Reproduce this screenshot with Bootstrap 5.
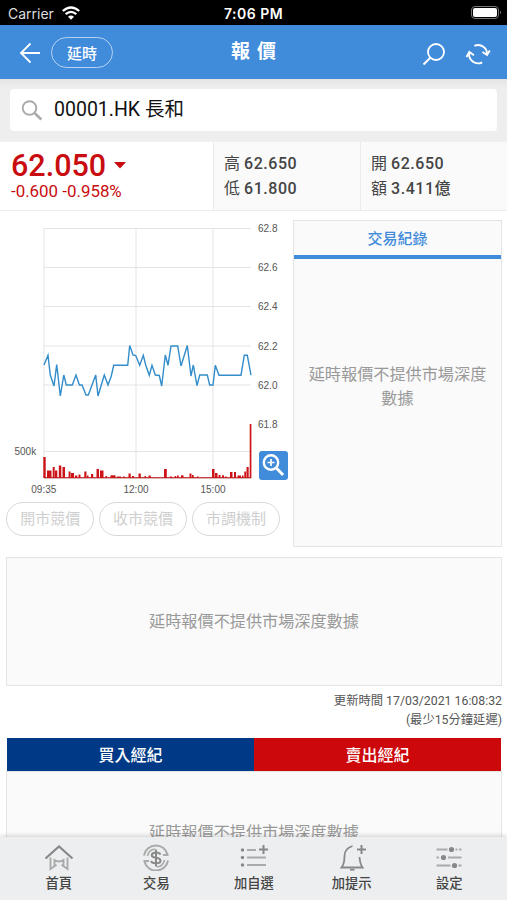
<!DOCTYPE html>
<html lang="zh-Hant">
<head>
<meta charset="utf-8">
<meta name="viewport" content="width=device-width, initial-scale=1">
<title>報價</title>
<link href="https://cdn.jsdelivr.net/npm/bootstrap@5.3.0/dist/css/bootstrap.min.css" rel="stylesheet">
<style>
body{font-family:Roboto,"Noto Sans CJK TC",sans-serif;color:#444;line-height:1.2;background:#fff}
svg{display:block;flex:none}
.status{height:25px;background:#000;color:#fff;font:14px/27px Inter,sans-serif;position:relative}
.status .carrier{color:#ddd;width:54px}
.status .clock{font-weight:600;font-size:14px;letter-spacing:.5px}
.topbar{height:54px;background:#418bdb;color:#fff}
.back-icon{margin:2px 10px 0 3px}
.delay{width:62px;height:31px;border:1px solid #b4d3f3;border-radius:16px;font-size:15px;line-height:32px;text-align:center;font-weight:500;margin-top:1px}
.title-text{font-size:19px;font-weight:700;width:45px;padding-top:1px}
.side{width:230px}
.refresh-icon{margin-left:19px}
.search-area{height:62px;background:linear-gradient(#e4e4e4,#eee 9px);padding:10px 10px}
.search-box{background:#fff;border-radius:4px;color:#111;font-size:19.5px;height:42px}
.search-box svg{margin:2px 11px 0}
.quote{height:70px;border-top:1px solid #f0f0f0;border-bottom:1px solid #ececec}
.q-main{width:213px;color:#c90c0f;padding:7px 0 0 11px}
.q-price{font-size:30.5px;font-weight:500;line-height:33px}
.q-change{font-size:16.9px;line-height:18px}
.q-cell{background:#fafafa;border-left:1px solid #ececec;font-size:16px;line-height:24.5px;padding:10px 0 0 10px;font-weight:500}
.q-cell b{font-weight:500;letter-spacing:.55px}
.q-cell span{font-weight:400}
.q-a{width:147px}
.chart-col{width:287px}
.chart-col text{font-family:"Liberation Sans",Arial,sans-serif;font-size:10px;fill:#555}
.magnify{position:absolute;left:259px;top:239.5px;width:29px;height:29px;border-radius:3px;background:#418bdb}
.pills{gap:4.6px;margin-left:6px}
.pill{width:88.3px;height:34px;border:1.5px solid #d9d9d9;border-radius:17px;color:#cfcfcf;font-size:15px;line-height:33px;text-align:center}
.panel{background:#fafafa;border:1px solid #e4e4e4;color:#999;font-size:16.15px}
.depth{width:209px;height:327px;margin:9px 5px 0 6px}
.depth-head{height:38px;border-bottom:4px solid #418bdb;color:#418bdb;font-size:15px;font-weight:500;line-height:37px}
.depth-note{line-height:24px;padding-bottom:32px}
.notice{height:129px;margin:10px 5px 0 6px;padding-top:1px}
.updated{font-size:12.3px;line-height:18.5px;color:#555;padding:6px 5px 0 0;height:52px}
.brokers{height:33px;color:#fff;font-size:16px;font-weight:500;line-height:35px;margin:0 6px 0 7px}
.buy{background:#003985}.sell{background:#cc080b}
.broker-body{flex:1 1 0;min-height:0;margin:0 5px 0 6px;padding-top:51px;border-bottom:0}
.tabs{height:63px;background:#eceeef;box-shadow:0 -1px 5px rgba(0,0,0,.18);font-size:13.3px;font-weight:500;color:#444;padding:7px 9px 0 10px}
.tabs svg{margin-bottom:5px}
</style>
<script src="https://cdn.jsdelivr.net/npm/bootstrap@5.3.0/dist/js/bootstrap.bundle.min.js"></script>
</head>
<body class="vh-100 overflow-hidden d-flex flex-column">
<div class="status d-flex justify-content-between flex-shrink-0">
  <div class="side d-flex ps-2"><span class="carrier">Carrier</span>
    <svg class="mt-1" width="18" height="16" viewBox="0 -2 18 16"><g fill="none" stroke="#fff" stroke-width="2.3"><path d="M.8 5Q9-2 17.2 5"/><path d="M3.7 8.2Q9 3.6 14.3 8.2"/></g><path d="M6 10.7Q9 8.2 12 10.7L9 13.8Z" fill="#fff"/></svg>
  </div>
  <span class="clock text-nowrap">7:06 PM</span>
  <div class="side d-flex justify-content-end pe-1 pt-1"><svg width="33" height="16" viewBox="0 -2 33 16"><rect x="1.500" y=".5" width="27" height="12" rx="3.500" fill="none" stroke="#777"/><rect x="3" y="2" width="24" height="9" rx="2" fill="#fff"/><path d="M30 4.500q2 2 0 4z" fill="#777"/></svg></div>
</div>
<header class="topbar d-flex align-items-center justify-content-between flex-shrink-0">
  <div class="side d-flex align-items-center ps-3">
    <svg class="back-icon" width="22" height="22" viewBox="0 0 22 22" fill="none" stroke="#fff" stroke-width="1.800"><path d="M11.500 1.500L2 11l9.500 9.500M2 11h19"/></svg>
    <div class="delay">延時</div>
  </div>
  <div class="title-text d-flex justify-content-between"><span>報</span><span>價</span></div>
  <div class="side d-flex align-items-center justify-content-end pe-3 pt-1">
    <svg width="24" height="24" viewBox="0 0 24 24" fill="none" stroke="#fff" stroke-width="1.800"><circle cx="14" cy="10" r="8"/><path d="M8.300 15.800L1.500 22.400" stroke-width="2.100"/></svg>
    <svg class="refresh-icon" width="26" height="24" viewBox="0 0 26 24" fill="none" stroke="#fff" stroke-width="1.900"><path d="M9.400 3.800A9 9 0 0 1 22 13"/><path d="M17.500 10l4.500 3 2.800-4.500"/><path d="M17.200 20.300A9 9 0 0 1 4.300 10.500"/><path d="M1.500 15l2.800-5L9 13.300"/></svg>
  </div>
</header>
<div class="search-area flex-shrink-0">
  <div class="search-box d-flex align-items-center">
    <svg width="22" height="22" viewBox="0 0 22 22" fill="none" stroke="#aaa"><circle cx="8.500" cy="8" r="6.800" stroke-width="1.900"/><path d="M13 12.500l7.300 7" stroke-width="2.500"/></svg>
    <span>00001.HK 長和</span>
  </div>
</div>
<section class="quote d-flex flex-shrink-0">
  <div class="q-main">
    <div class="q-price d-flex align-items-center">62.050 <svg class="ms-2" width="12" height="7" viewBox="0 0 12 7"><path d="M0 0h12L6 6.500z" fill="#c90c0f"/></svg></div>
    <div class="q-change">-0.600 -0.958%</div>
  </div>
  <div class="q-cell q-a"><div><span>高</span> <b>62.650</b></div><div><span>低</span> <b>61.800</b></div></div>
  <div class="q-cell flex-fill"><div><span>開</span> <b>62.650</b></div><div><span>額</span> <b>3.411億</b></div></div>
</section>
<section class="d-flex flex-shrink-0">
  <div class="chart-col position-relative">
    <svg width="287" height="291" viewBox="0 211 287 291">
      <path d="M44 228.500H251M44 267.500H251M44 306.500H251M44 346H251M44 385H251M44 451.500H251M44 228V478M136 228V478M213 228V478" stroke="#e4e4e4" fill="none"/>
      <path d="M44 478H251" stroke="#bbb"/>
      <g id="bars" fill="#cc1418"></g>
      <path d="M44 365L48 355.3 50.3 375 54 386 56.7 364.5 60.3 396 63.8 375 66.3 385H72.3L76 375 79.4 385H82L86 395H88.3L95.7 375 98 396 104.3 375 108 385 111.3 376 113.7 365.3H127.7L129.7 345.5 133 355 135.7 355.5 139.7 365.3 143.3 355.3 145.7 365 149.3 375.3 152 365.3 155.3 375 159.3 375.5 161.7 386 165.3 355 168 365.3 171 346H177.7L181 366 187.3 345.5 191 376 193.3 365 197 385.7 199.7 375H207.3L209.7 385H213L215.3 365.3 219 375.2H241L244.3 355.3H247.3L251 375.2" fill="none" stroke="#338dca" stroke-width="1.400"/>
      <text x="258" y="232.300">62.8</text><text x="258" y="271.300">62.6</text><text x="258" y="310.300">62.4</text><text x="258" y="349.500">62.2</text><text x="258" y="388.500">62.0</text><text x="258" y="427.700">61.8</text>
      <text x="14.500" y="454.800">500k</text><text x="31.300" y="492.800">09:35</text><text x="123.500" y="492.800">12:00</text><text x="200.500" y="492.800">15:00</text>
    </svg>
    <div class="magnify"><svg width="29" height="29" viewBox="0 0 29 29" fill="none" stroke="#fff"><circle cx="12" cy="11.500" r="7.200" stroke-width="2.400"/><path d="M17.300 17l6.800 7" stroke-width="3"/><path d="M12 8v7M8.500 11.500h7" stroke-width="1.700"/></svg></div>
    <div class="pills d-flex text-nowrap"><div class="pill">開市競價</div><div class="pill">收市競價</div><div class="pill">市調機制</div></div>
  </div>
  <div class="panel depth d-flex flex-column text-center">
    <div class="depth-head">交易紀錄</div>
    <div class="depth-note flex-fill d-flex align-items-center justify-content-center px-2">延時報價不提供市場深度<br>數據</div>
  </div>
</section>
<div class="panel notice flex-shrink-0 d-flex align-items-center justify-content-center">延時報價不提供市場深度數據</div>
<div class="updated flex-shrink-0 text-end"><div>更新時間 17/03/2021 16:08:32</div><div>(最少15分鐘延遲)</div></div>
<div class="brokers d-flex flex-shrink-0 text-center"><div class="buy w-50">買入經紀</div><div class="sell w-50">賣出經紀</div></div>
<div class="panel broker-body d-flex justify-content-center overflow-hidden"><span>延時報價不提供市場深度數據</span></div>
<nav class="tabs row g-0 row-cols-5 flex-shrink-0 text-center position-relative">
  <div class="col d-flex flex-column align-items-center"><svg width="30" height="27" viewBox="0 0 30 27" fill="none"><path d="M1.500 14.500L15 2.500l13.500 12" stroke="#888" stroke-width="2.200"/><path d="M6.500 13.500V25l6-4.200M23.500 13.500V25l-6-4.200M10.500 21.500V16q4.500 3 9 0v5.500" stroke="#aaa" stroke-width="1.900"/></svg>首頁</div>
  <div class="col d-flex flex-column align-items-center"><svg width="28" height="27" viewBox="0 0 28 27" fill="none" stroke="#aaa" stroke-width="2"><path d="M2 11.500A12 12 0 0 1 25.500 10.500M26 16.500A12 12 0 0 1 2.500 17.500"/><path d="M5.500 12A8.800 8.800 0 0 1 13 5M22.500 16A8.800 8.800 0 0 1 15 23" stroke-width="1.500"/><path d="M21 11h5.500M1.500 17H7"/><path d="M18.500 10.500q-1-2-4.500-2t-4.300 2.500q0 2.200 4.300 2.800t4.500 2.900q0 2.500-4.500 2.500t-4.800-2.300M14 5.500v17" stroke="#888"/></svg>交易</div>
  <div class="col d-flex flex-column align-items-center"><svg width="28" height="27" viewBox="0 0 28 27" fill="none" stroke="#aaa" stroke-width="2"><path d="M7 6h9M7 13.500h19M7 21h19"/><path d="M23.500 1v9M19 5.500h9" stroke="#888"/><g fill="#888" stroke="none"><circle cx="2.500" cy="6" r="1.700"/><circle cx="2.500" cy="13.500" r="1.700"/><circle cx="2.500" cy="21" r="1.700"/></g></svg>加自選</div>
  <div class="col d-flex flex-column align-items-center"><svg width="28" height="27" viewBox="0 0 28 27" fill="none" stroke="#888" stroke-width="1.800"><path d="M14.500 2Q6.500 4.500 6.500 12q0 8-3 11.500h21Q22 20 21.500 13"/><path d="M12 25.700h4.500"/><path d="M23.500 1v9M19 5.500h9" stroke-width="2"/></svg>加提示</div>
  <div class="col d-flex flex-column align-items-center"><svg width="28" height="27" viewBox="0 0 28 27" stroke="#aaa" stroke-width="2"><path d="M1.500 5.500h11M20.500 5.500h2M24 5.500h2.500M1.500 13.500H4M13 13.500h13.500M1.500 21.500h14M23.500 21.500h3"/><g fill="#888" stroke="none"><circle cx="16.500" cy="5.500" r="2.600"/><circle cx="8.500" cy="13.500" r="2.600"/><circle cx="19.500" cy="21.500" r="2.600"/></g></svg>設定</div>
</nav>
<script>
// Volume bars: left edge, width, height
const volume=[[43.3,2.4,21],[47,4.5,7.5],[52.7,2,11],[55,2.3,7.5],[58.8,2.5,12.5],[62.5,2.5,11],[68.6,2,6.5],[71,3,5],[75,2.3,2.5],[78.5,2,3.5],[84.3,2.2,6.5],[87,1.5,2.5],[91,2.2,4],[96.5,2.5,9],[100,3.5,7.5],[105.5,1.5,2],[110.5,5,2.7],[117,4,1.5],[123,1.8,1.5],[128.5,2.2,4.5],[132,2,2],[138.5,2.3,4.5],[144.5,1.5,2],[148.5,2.2,2.5],[164,2.8,9],[170,2,1.5],[174.7,1.5,2],[177,1.7,2.5],[181,2.5,2.7],[189.5,2,4.5],[192,1.7,3],[197,1.5,1.5],[212,2.5,9],[215,2.5,5],[218.5,2,3],[222,2,2.7],[225,1.5,1.5],[230,2.5,6],[234,2,6],[237.5,3.5,2.5],[242,1.5,2.5],[244.3,1.8,6.5],[246.5,2.2,11],[249.7,1.7,54]];
document.getElementById("bars").innerHTML='<rect x="44" y="477.2" width="207" height="1"/>'+volume.map(([x,w,h])=>`<rect x="${x}" y="${478-h}" width="${w}" height="${h}"/>`).join("");
</script>
</body>
</html>
